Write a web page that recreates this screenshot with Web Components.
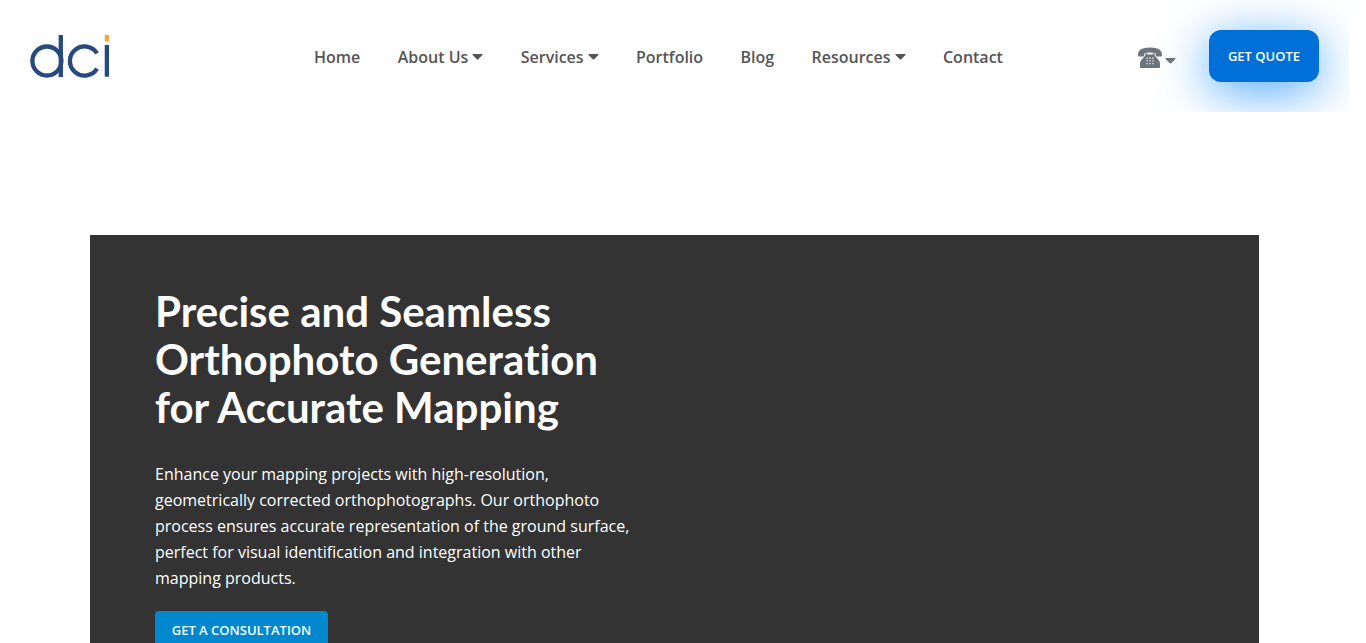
<!DOCTYPE html>
<html lang="en">
<head>
<meta charset="utf-8">
<meta name="viewport" content="width=device-width, initial-scale=1">
<title>Orthophoto Generation | DCI</title>
<style>
  body {
    margin: 0;
    padding-right: 17px;
    background: #fff;
    font-family: "Open Sans", "Noto Sans", sans-serif;
    font-size: 16px;
    color: #555;
  }
</style>
</head>
<body>
<site-header>
  <site-logo slot="brand"></site-logo>
  <nav-item href="#home">Home</nav-item>
  <nav-item href="#about" menu>About Us</nav-item>
  <nav-item href="#services" menu>Services</nav-item>
  <nav-item href="#portfolio">Portfolio</nav-item>
  <nav-item href="#blog">Blog</nav-item>
  <nav-item href="#resources" menu>Resources</nav-item>
  <nav-item href="#contact">Contact</nav-item>
  <phone-menu slot="actions"></phone-menu>
  <action-button slot="actions" kind="quote">GET QUOTE</action-button>
</site-header>
<main>
  <hero-banner>
    <span slot="title">Precise and Seamless<br>Orthophoto Generation<br>for Accurate Mapping</span>
    <span slot="text">Enhance your mapping projects with high-resolution,<br>geometrically corrected orthophotographs. Our orthophoto<br>process ensures accurate representation of the ground surface,<br>perfect for visual identification and integration with other<br>mapping products.</span>
    <action-button slot="action" kind="consult">GET A CONSULTATION</action-button>
  </hero-banner>
</main>
<script>
const define = (name, html, setup) => {
  const template = document.createElement('template');
  template.innerHTML = html;
  customElements.define(name, class extends HTMLElement {
    connectedCallback() {
      if (this.shadowRoot) return;
      this.attachShadow({ mode: 'open' }).append(template.content.cloneNode(true));
      if (setup) setup(this, this.shadowRoot);
    }
  });
};

define('site-header', `
  <style>
    :host { display: block; overflow: hidden; }
    header { display: grid; grid-template-columns: 284px minmax(0, 1fr) auto; align-items: center; height: 112px; padding: 0 30px; box-sizing: border-box; }
    nav { display: flex; justify-content: space-between; max-width: 689px; padding-top: 2px; }
    .actions { display: flex; align-items: center; gap: 33px; }
  </style>
  <header>
    <slot name="brand"></slot>
    <nav aria-label="Main"><slot></slot></nav>
    <div class="actions"><slot name="actions"></slot></div>
  </header>`);

define('site-logo', `
  <style>
    :host { display: block; }
    a { display: block; width: 80px; }
    svg { display: block; }
  </style>
  <a href="#home" aria-label="dci home">
    <svg width="80" height="44" viewBox="0 0 80 44" fill="none" stroke="#264a7f" stroke-width="4.3">
      <circle cx="16.9" cy="27" r="14.5"/>
      <path d="M30.8 1v42M76.9 11v31.8"/>
      <path d="M67 19.4A14.6 14.6 0 1 0 67 34.6"/>
      <path d="M76.900 1v6.400" stroke="#f9a13a"/>
    </svg>
  </a>`);

define('nav-item', `
  <style>
    :host { display: block; }
    a { display: flex; align-items: center; gap: 4px; color: inherit; text-decoration: none; font-weight: 600; line-height: 24px; white-space: nowrap; }
    svg { display: none; }
    :host([menu]) svg { display: block; }
  </style>
  <a><slot></slot><svg width="11" height="6" viewBox="0 0 11 6" aria-hidden="true"><path d="M.8 0h9.400q.7.4.2 1L6.200 5.300q-.7.6-1.400 0L.6 1Q.1.4.8 0z" fill="#555"/></svg></a>`,
  (host, root) => { root.querySelector('a').href = host.getAttribute('href'); });

define('phone-menu', `
  <style>
    :host { display: block; }
    button { display: flex; align-items: center; gap: 2px; margin: 0; padding: 4px 0 0; border: 0; background: none; color: #6c757d; }
    .caret { padding-top: 6px; }
  </style>
  <button type="button" aria-label="Phone numbers">
    <svg width="26" height="22" viewBox="0 0 26 22" fill="currentColor" aria-hidden="true">
      <path d="M1 8.500C.6 3.600 4.500.6 13 .6s12.400 3 12 7.900q-.1.900-1 .9h-4.200q-.9 0-1-.9l-.3-2.200Q13 4.700 7.500 6.300l-.3 2.200q-.1.900-1 .9H2q-.9 0-1-.9z"/>
      <path d="M8.300 6.400h2v1.200h5.400V6.400h2v2.100c1.500 2.200 5 4.600 5.300 7.700V20q0 1-1 1H4q-1 0-1-1v-3.800c.3-3.100 3.800-5.500 5.300-7.700z"/>
      <path d="M9.400 10.500h1.400v1.400H9.400zm2.900 0h1.400v1.400h-1.400zm2.900 0h1.400v1.400h-1.400zM9.400 13.200h1.400v1.400H9.400zm2.900 0h1.400v1.400h-1.400zm2.900 0h1.400v1.400h-1.400zM9.400 15.900h1.400v1.400H9.400zm2.900 0h1.400v1.400h-1.400zm2.900 0h1.400v1.400h-1.400z" fill="#dfe2e5"/>
    </svg>
    <svg class="caret" width="11" height="6" viewBox="0 0 11 6" aria-hidden="true"><path d="M.8 0h9.400q.7.4.2 1L6.200 5.300q-.7.6-1.400 0L.6 1Q.1.4.8 0z" fill="currentColor"/></svg>
  </button>`);

define('action-button', `
  <style>
    :host { display: block; }
    button { display: block; box-sizing: border-box; margin: 0; padding: 0; border: 0; font: 600 13px/20px "Open Sans", "Noto Sans", sans-serif; color: #fff; white-space: nowrap; cursor: pointer; }
    :host([kind="quote"]) button { width: 110px; height: 52px; border-radius: 12px; background: #0070d8; box-shadow: 0 10px 50px #0084ffb3; }
    :host([kind="consult"]) button { width: 173px; height: 38px; border-radius: 4px; background: #0088cf; }
  </style>
  <button type="button"><slot></slot></button>`);

define('hero-banner', `
  <style>
    :host { display: block; margin: 123px 90px 0; background: #333; color: #fff; }
    section { padding: 52px 65px; }
    h1 { margin: 0 0 30px; font-family: Lato, "Open Sans", sans-serif; font-size: 42px; line-height: 48px; font-weight: 700; font-variant-ligatures: none; }
    p { margin: 0 0 20px; font-size: 16px; line-height: 26px; }
  </style>
  <section>
    <h1><slot name="title"></slot></h1>
    <p><slot name="text"></slot></p>
    <slot name="action"></slot>
  </section>`);
</script>
</body>
</html>
